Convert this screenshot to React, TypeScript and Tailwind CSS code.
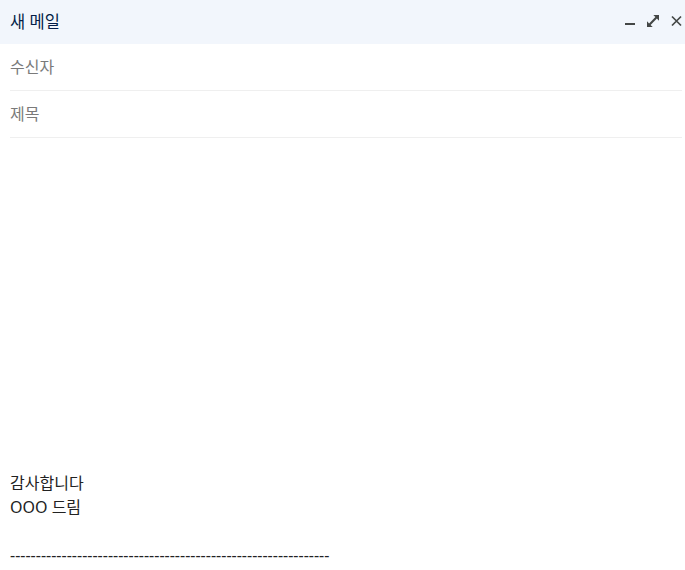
import React from "react";

const font = { fontFamily: '"Noto Sans", "Noto Sans CJK KR", sans-serif' };

export default function App() {
  return (
    <div className="w-[685px] h-[570px] bg-white overflow-hidden" style={font}>
      <div className="h-[44px] bg-[#f2f6fc] flex items-center pl-[10px] pr-[3px]">
        <span className="text-[16.5px] text-[#041e49] leading-none">새 메일</span>
        <div className="ml-auto self-start mt-[15px] flex items-start">
          <svg width="10" height="12" viewBox="0 0 10 12" className="mr-[12px]">
            <rect x="0" y="8" width="10" height="2" fill="#444746" />
          </svg>
          <svg width="12" height="12" viewBox="0 0 12 12" className="mr-[12px]">
            <path d="M6.3 0H12v5.7L9.9 3.6 3.6 9.9 5.7 12H0V6.3l2.1 2.1 6.3-6.3z" fill="#444746" />
          </svg>
          <svg width="11" height="12" viewBox="0 0 11 12">
            <path d="M1 1.5 10 10.5M10 1.5 1 10.5" stroke="#444746" strokeWidth="1.7" />
          </svg>
        </div>
      </div>
      <div className="ml-[10px] w-[672px]">
        <div className="h-[47px] flex items-center border-b border-[#efefef] text-[16px] text-[#7a7a7a]">수신자</div>
        <div className="h-[47px] flex items-center border-b border-[#efefef] text-[16px] text-[#7a7a7a]">제목</div>
        <div className="h-[333px]" />
        <div className="text-[16px] leading-[24px] text-[#222222]">
          <div>감사합니다</div>
          <div>OOO 드림</div>
          <div>&nbsp;</div>
          <div className="whitespace-nowrap">--------------------------------------------------------------</div>
        </div>
      </div>
    </div>
  );
}
